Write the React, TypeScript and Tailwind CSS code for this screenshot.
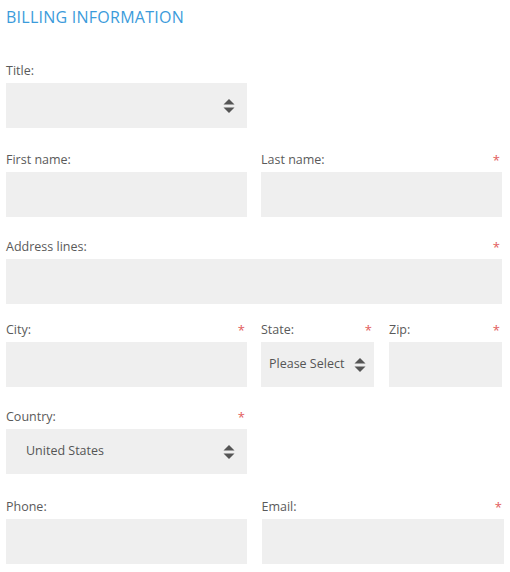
import React from "react";

const font = { fontFamily: '"Open Sans", "Noto Sans", sans-serif' };

function Arrows() {
  return (
    <svg width="12" height="16" viewBox="0 0 12 16" className="shrink-0 text-[#555]">
      <path d="M6 1 L11.5 6.5 H0.5 Z" fill="currentColor" />
      <path d="M6 15 L11.5 9.5 H0.5 Z" fill="currentColor" />
    </svg>
  );
}

function Label({ text, required }: { text: string; required?: boolean }) {
  return (
    <div className="flex h-[18px] items-center justify-between text-[12.5px] text-[#5a5a5a]">
      <span>{text}</span>
      {required && <span className="pr-[2px] text-[13px] leading-none text-[#e25b5b]">*</span>}
    </div>
  );
}

function Input() {
  return <div className="mt-[3px] h-[45px] bg-[#efefef]" />;
}

function Select({ value, pl, pr }: { value?: string; pl: string; pr: string }) {
  return (
    <div
      className={`mt-[3px] flex h-[45px] items-center justify-between bg-[#efefef] text-[12.5px] text-[#555] ${pl} ${pr}`}
    >
      <span>{value}</span>
      <Arrows />
    </div>
  );
}

export default function App() {
  return (
    <div className="w-[510px] bg-white pl-[6px] pr-[8px] pt-[8px]" style={font}>
      <h2 className="h-[19px] text-[16px] leading-[19px] tracking-[0.25px] text-[#3b9bdb]">
        BILLING INFORMATION
      </h2>

      {/* Title */}
      <div className="mt-[35px] grid grid-cols-2 gap-x-[14px]">
        <div>
          <Label text="Title:" />
          <Select pl="pl-[20px]" pr="pr-[12px]" />
        </div>
      </div>

      {/* Names */}
      <div className="mt-[23px] grid grid-cols-2 gap-x-[14px]">
        <div>
          <Label text="First name:" />
          <Input />
        </div>
        <div>
          <Label text="Last name:" required />
          <Input />
        </div>
      </div>

      {/* Address */}
      <div className="mt-[21px]">
        <Label text="Address lines:" required />
        <Input />
      </div>

      {/* City / State / Zip */}
      <div className="mt-[17px] grid grid-cols-2 gap-x-[14px]">
        <div>
          <Label text="City:" required />
          <Input />
        </div>
        <div className="grid grid-cols-2 gap-x-[15px]">
          <div>
            <Label text="State:" required />
            <Select value="Please Select" pl="pl-[8px]" pr="pr-[8px]" />
          </div>
          <div>
            <Label text="Zip:" required />
            <Input />
          </div>
        </div>
      </div>

      {/* Country */}
      <div className="mt-[21px] grid grid-cols-2 gap-x-[14px]">
        <div>
          <Label text="Country:" required />
          <Select value="United States" pl="pl-[20px]" pr="pr-[12px]" />
        </div>
      </div>

      {/* Phone / Email */}
      <div className="mt-[24px] grid grid-cols-2 gap-x-[15px] pb-[9px]">
        <div>
          <Label text="Phone:" />
          <Input />
        </div>
        <div className="-mr-[2px]">
          <Label text="Email:" required />
          <Input />
        </div>
      </div>
    </div>
  );
}
